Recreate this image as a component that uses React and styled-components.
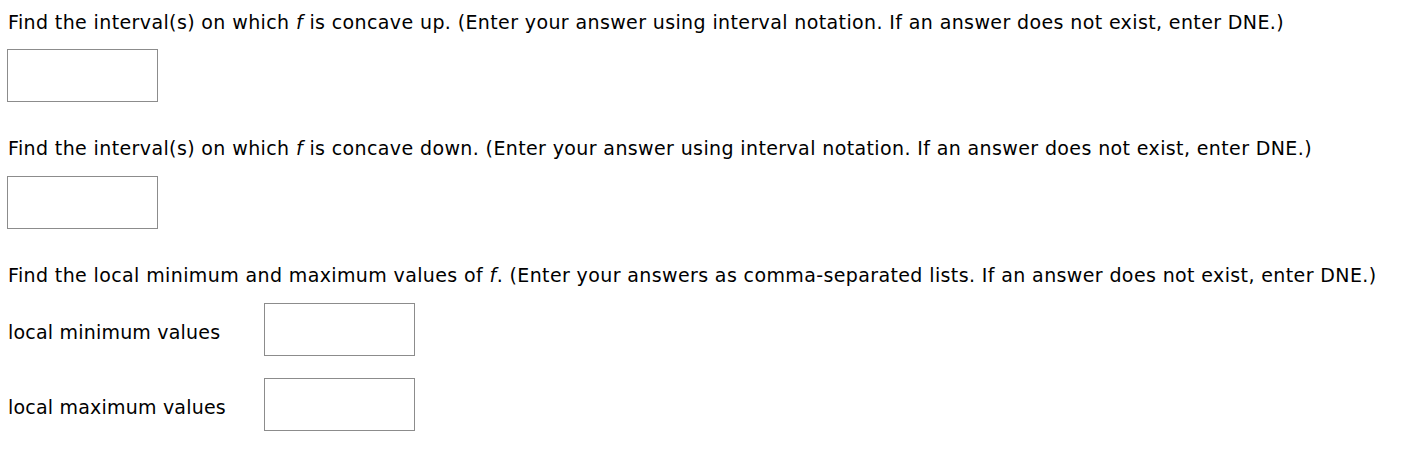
import React from "react";
import styled, { createGlobalStyle } from "styled-components";

const Global = createGlobalStyle`
  html, body { margin: 0; padding: 0; background: #fff; }
  body { font-family: Verdana, "DejaVu Sans", sans-serif; color: #000; }
`;

const Page = styled.div`
  padding: 11px 8px 0 8px;
  display: flex;
  flex-direction: column;
`;

const Question = styled.div`
  display: flex;
  flex-direction: column;
  gap: ${(p) => p.$gap || 16}px;
  margin-bottom: ${(p) => p.$after || 0}px;
`;

const Prompt = styled.p`
  margin: 0;
  font-size: 19px;
  line-height: 22px;
  letter-spacing: 0.38px;
  white-space: nowrap;
`;

const Fn = styled.i`
  font-style: italic;
`;

const AnswerBox = styled.input`
  box-sizing: border-box;
  width: 151px;
  height: 53px;
  margin: 0 0 0 -1px;
  border: 1px solid #8c8c8c;
  background: #fff;
  outline: none;
  padding: 0;
`;

const Rows = styled.div`
  display: flex;
  flex-direction: column;
  gap: 22px;
`;

const Row = styled.div`
  display: grid;
  grid-template-columns: 257px 151px;
  align-items: center;
`;

const Label = styled.span`
  font-size: 19px;
  line-height: 22px;
  letter-spacing: 0.2px;
  padding-top: ${(p) => p.$shift || 0}px;
`;

export default function App() {
  return (
    <>
      <Global />
      <Page>
        <Question $after={35}>
          <Prompt>
            Find the interval(s) on which <Fn>f</Fn> is concave up. (Enter your answer using interval notation. If an answer does not exist, enter DNE.)
          </Prompt>
          <AnswerBox />
        </Question>
        <Question $after={35} $gap={17}>
          <Prompt>
            Find the interval(s) on which <Fn>f</Fn> is concave down. (Enter your answer using interval notation. If an answer does not exist, enter DNE.)
          </Prompt>
          <AnswerBox />
        </Question>
        <Question $gap={17}>
          <Prompt>
            Find the local minimum and maximum values of <Fn>f</Fn>. (Enter your answers as comma-separated lists. If an answer does not exist, enter DNE.)
          </Prompt>
          <Rows>
            <Row>
              <Label $shift={4}>local minimum values</Label>
              <AnswerBox />
            </Row>
            <Row>
              <Label $shift={5}>local maximum values</Label>
              <AnswerBox />
            </Row>
          </Rows>
        </Question>
      </Page>
    </>
  );
}
